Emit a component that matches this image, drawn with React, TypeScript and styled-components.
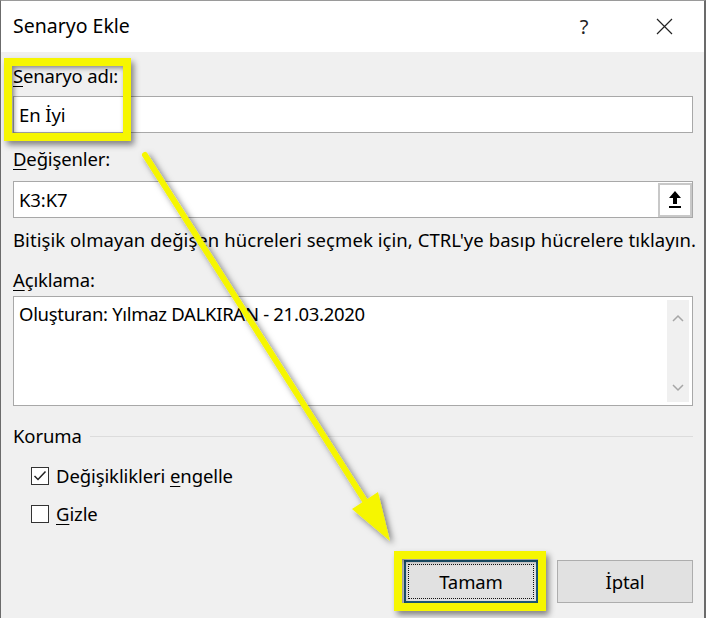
import styled, { createGlobalStyle } from "styled-components";

const GlobalStyle = createGlobalStyle`
  html, body {
    margin: 0;
    padding: 0;
    background: #f0f0f0;
  }
  body {
    font-family: "Segoe UI", "Noto Sans", "Open Sans", sans-serif;
    color: #000;
  }
`;

const Window = styled.div`
  position: relative;
  width: 706px;
  height: 618px;
  box-sizing: border-box;
  background: #f0f0f0;
  border-left: 1px solid #6b6b6b;
  border-right: 2px solid #6b6b6b;
  border-top: 1px solid #9a9a9a;
  overflow: hidden;
`;

const TitleBar = styled.div`
  height: 51px;
  background: #fff;
  display: flex;
  align-items: center;
  padding-left: 12px;
  padding-right: 16px;
`;

const Title = styled.div`
  flex: 1;
  font-size: 19.5px;
  padding-bottom: 2px;
`;

const TitleButton = styled.div`
  width: 48px;
  display: flex;
  justify-content: center;
  font-size: 20px;
  color: #222;
  margin-left: 32px;
`;

const Body = styled.div`
  display: flex;
  flex-direction: column;
  padding: 12px 11px 0 12px;
`;

const Label = styled.div<{ $mt?: number; $wide?: boolean }>`
  font-size: 18.5px;
  line-height: 24px;
  height: 24px;
  margin-top: ${(p) => p.$mt ?? 0}px;
  letter-spacing: ${(p) => (p.$wide ? "0.06px" : "-0.15px")};
  white-space: nowrap;
`;

const Key = styled.span`
  text-decoration: underline;
  text-underline-offset: 3px;
  text-decoration-thickness: 1px;
`;

const TextBox = styled.div<{ $mt: number; $h: number }>`
  margin-top: ${(p) => p.$mt}px;
  height: ${(p) => p.$h}px;
  box-sizing: border-box;
  background: #fff;
  border: 1px solid #a8a8a8;
  display: flex;
  align-items: center;
  padding-left: 5px;
  font-size: 18.5px;
  letter-spacing: -0.1px;
`;

const BoxText = styled.div`
  flex: 1;
`;

const RefButton = styled.div`
  width: 34px;
  height: 34px;
  box-sizing: border-box;
  border: 2px solid #c8c8c8;
  background: #fff;
  display: flex;
  align-items: center;
  justify-content: center;
`;

const Memo = styled.div`
  margin-top: 4px;
  height: 110px;
  box-sizing: border-box;
  background: #fff;
  border: 1px solid #a8a8a8;
  display: flex;
  font-size: 18.5px;
  letter-spacing: -0.3px;
`;

const MemoText = styled.div`
  flex: 1;
  padding: 5px 0 0 5px;
  line-height: 24px;
`;

const ScrollBar = styled.div`
  width: 22px;
  margin: 3px 3px 3px 0;
  background: #f0f0f0;
  display: flex;
  flex-direction: column;
  justify-content: space-between;
  align-items: center;
  padding: 14px 0 10px;
`;

const Group = styled.div`
  margin-top: 18px;
  display: flex;
  align-items: center;
  gap: 8px;
  font-size: 18.5px;
  line-height: 24px;
  letter-spacing: -0.1px;
`;

const GroupLine = styled.div`
  flex: 1;
  height: 1px;
  background: #dcdcdc;
`;

const CheckRow = styled.div<{ $mt: number }>`
  margin-top: ${(p) => p.$mt}px;
  margin-left: 18px;
  display: flex;
  align-items: center;
  gap: 7px;
  font-size: 18.5px;
  line-height: 24px;
  letter-spacing: -0.1px;
`;

const Check = styled.div`
  width: 18px;
  height: 18px;
  box-sizing: border-box;
  border: 1px solid #333;
  background: #fff;
  display: flex;
  align-items: center;
  justify-content: center;
`;

const ButtonRow = styled.div`
  margin-top: 34px;
  display: flex;
  justify-content: flex-end;
  gap: 19px;
`;

const Button = styled.div<{ $primary?: boolean }>`
  width: ${(p) => (p.$primary ? 134 : 136)}px;
  height: 43px;
  box-sizing: border-box;
  background: #e1e1e1;
  border: ${(p) => (p.$primary ? "2px solid #1e5c7a" : "1px solid #adadad")};
  display: flex;
  align-items: center;
  justify-content: center;
  font-size: 18.5px;
  letter-spacing: -0.1px;
  padding: ${(p) => (p.$primary ? "2px" : "0")};
`;

const FocusRect = styled.div`
  width: 100%;
  height: 100%;
  box-sizing: border-box;
  border: 1px dotted #111;
  display: flex;
  align-items: center;
  justify-content: center;
`;

const Highlight = styled.div<{ $x: number; $y: number; $w: number; $h: number }>`
  position: absolute;
  left: ${(p) => p.$x}px;
  top: ${(p) => p.$y}px;
  width: ${(p) => p.$w}px;
  height: ${(p) => p.$h}px;
  box-sizing: border-box;
  border: 8px solid #f6f600;
  box-shadow: 3px 4px 6px rgba(0, 0, 0, 0.45),
    inset 2px 2px 5px rgba(0, 0, 0, 0.45);
  pointer-events: none;
`;

const Overlay = styled.svg`
  position: absolute;
  left: 0;
  top: 0;
  pointer-events: none;
`;

const UpIcon = () => (
  <svg width="16" height="20" viewBox="0 0 16 20">
    <path d="M8 1 L14 8 L10 8 L10 14 L6 14 L6 8 L2 8 Z" fill="#000" />
    <rect x="2" y="16" width="12" height="2" fill="#000" />
  </svg>
);

const Chevron = ({ up }: { up?: boolean }) => (
  <svg width="12" height="8" viewBox="0 0 12 8">
    <path
      d={up ? "M1 7 L6 2 L11 7" : "M1 1 L6 6 L11 1"}
      fill="none"
      stroke="#a6a6a6"
      strokeWidth="1.5"
    />
  </svg>
);

const Tick = () => (
  <svg width="14" height="12" viewBox="0 0 14 12">
    <path d="M1.5 6 L5 9.5 L12.5 1.5" fill="none" stroke="#222" strokeWidth="1.5" />
  </svg>
);

const CloseIcon = () => (
  <svg width="17" height="17" viewBox="0 0 17 17">
    <path d="M1 1 L16 16 M16 1 L1 16" stroke="#222" strokeWidth="1.2" />
  </svg>
);

export default function App() {
  return (
    <>
      <GlobalStyle />
      <Window>
        <TitleBar>
          <Title>Senaryo Ekle</Title>
          <TitleButton>?</TitleButton>
          <TitleButton>
            <CloseIcon />
          </TitleButton>
        </TitleBar>
        <Body>
          <Label>
            <Key>S</Key>enaryo adı:
          </Label>
          <TextBox $mt={8} $h={37}>
            <BoxText>En İyi</BoxText>
          </TextBox>
          <Label $mt={14}>
            <Key>D</Key>eğişenler:
          </Label>
          <TextBox $mt={10} $h={37}>
            <BoxText>K3:K7</BoxText>
            <RefButton>
              <UpIcon />
            </RefButton>
          </TextBox>
          <Label $mt={10} $wide>
            Bitişik olmayan değişen hücreleri seçmek için, CTRL'ye basıp hücrelere tıklayın.
          </Label>
          <Label $mt={16}>
            <Key>A</Key>çıklama:
          </Label>
          <Memo>
            <MemoText>Oluşturan: Yılmaz DALKIRAN - 21.03.2020</MemoText>
            <ScrollBar>
              <Chevron up />
              <Chevron />
            </ScrollBar>
          </Memo>
          <Group>
            Koruma
            <GroupLine />
          </Group>
          <CheckRow $mt={16}>
            <Check>
              <Tick />
            </Check>
            <span>
              Değişiklikleri <Key>e</Key>ngelle
            </span>
          </CheckRow>
          <CheckRow $mt={14}>
            <Check />
            <span>
              <Key>G</Key>izle
            </span>
          </CheckRow>
          <ButtonRow>
            <Button $primary>
              <FocusRect>Tamam</FocusRect>
            </Button>
            <Button>İptal</Button>
          </ButtonRow>
        </Body>

        <Highlight $x={3} $y={57} $w={127} $h={83} />
        <Highlight $x={393} $y={550} $w={152} $h={60} />

        <Overlay width="706" height="618" viewBox="0 0 706 618">
          <defs>
            <filter id="shadow" x="-20%" y="-20%" width="140%" height="140%">
              <feDropShadow dx="3" dy="3" stdDeviation="3" floodColor="#000" floodOpacity="0.5" />
            </filter>
          </defs>
          <g filter="url(#shadow)">
            <line
              x1="144"
              y1="154"
              x2="366"
              y2="503"
              stroke="#f6f600"
              strokeWidth="6"
              strokeLinecap="round"
            />
            <polygon points="389,540 377,491 351,508" fill="#f6f600" />
          </g>
        </Overlay>
      </Window>
    </>
  );
}
